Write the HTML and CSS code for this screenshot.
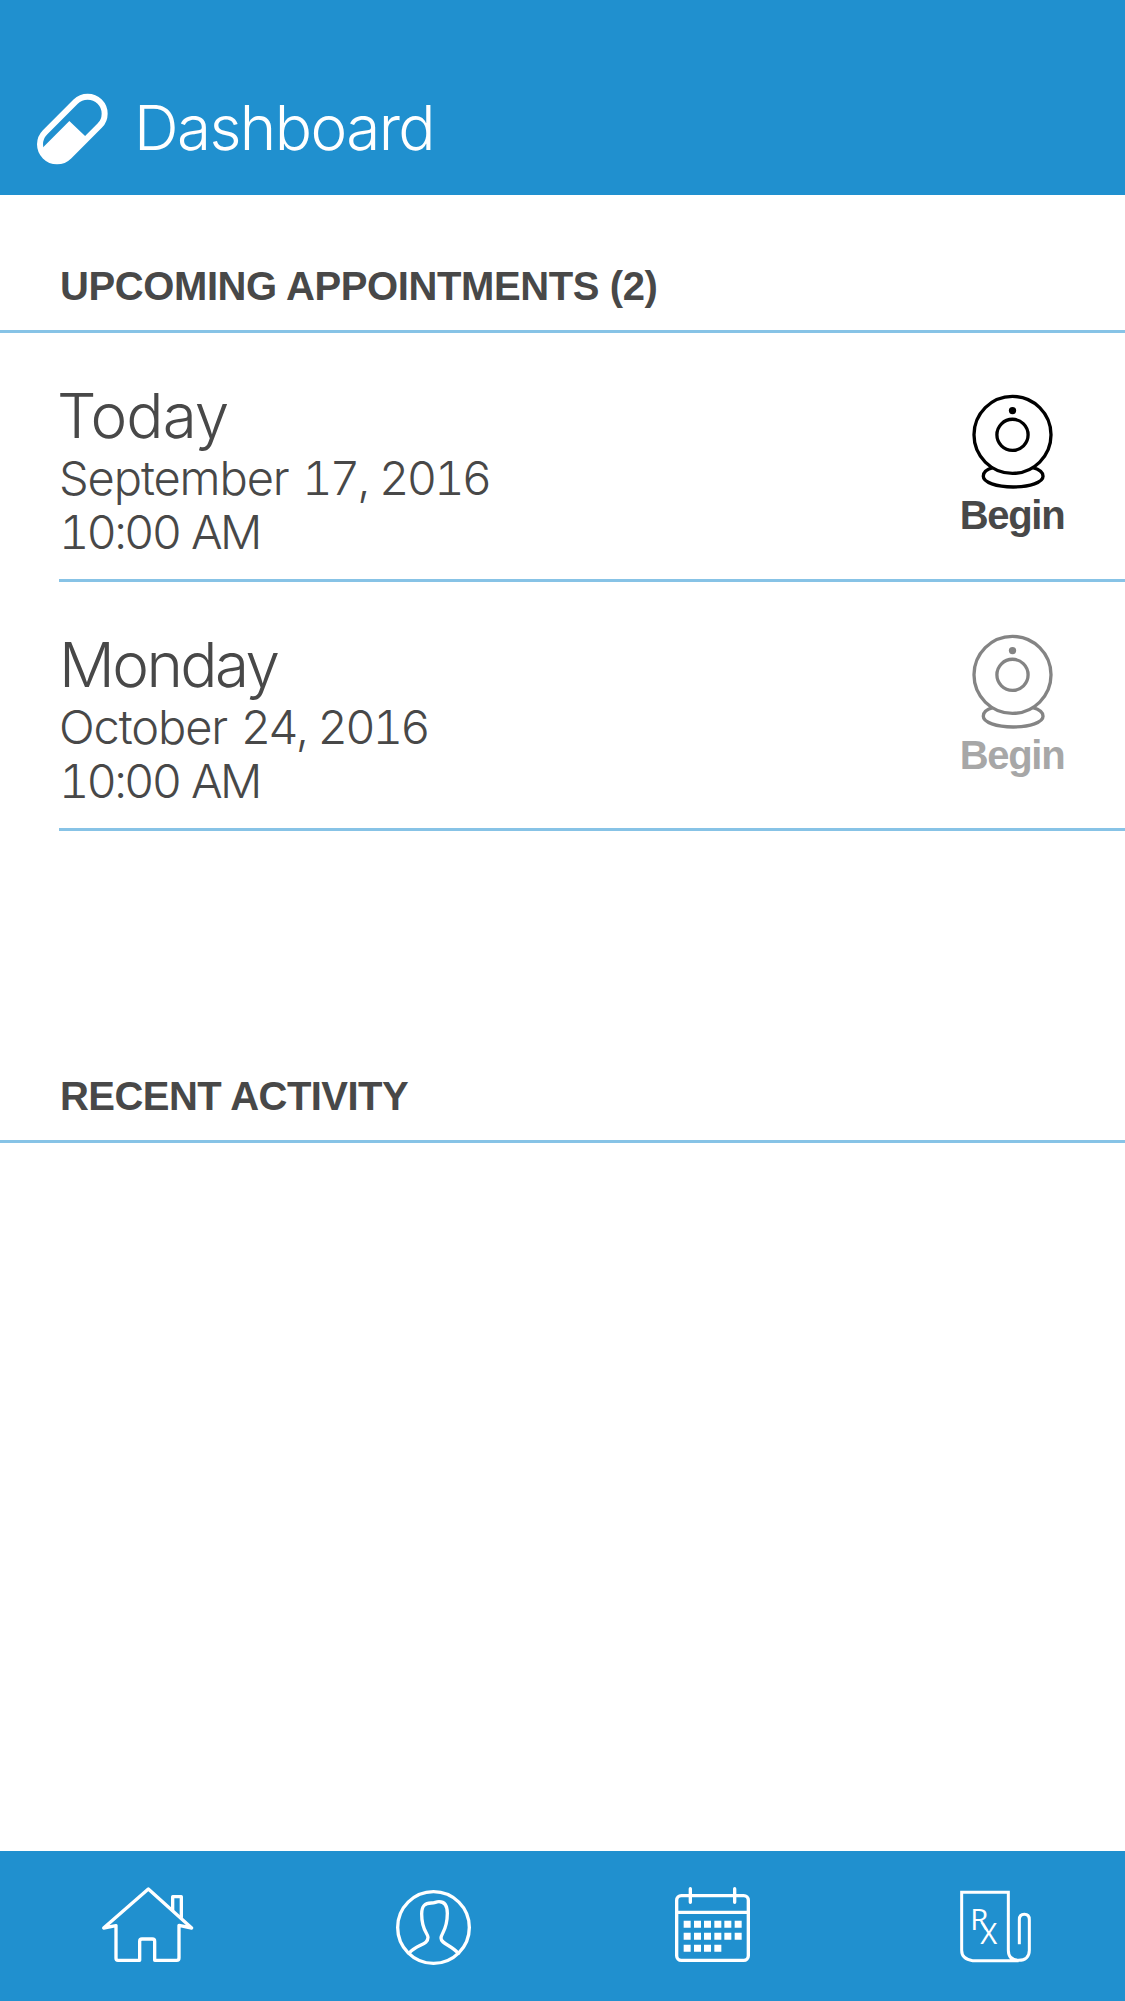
FILE: index.html
```
<!DOCTYPE html>
<html lang="en">

<head>
    <meta charset="UTF-8">
    <meta name="viewport" content="width=device-width, initial-scale=1.0">
    <link rel="stylesheet" href="styles.css">
    <title>Dashboard</title>
</head>

<body>
    <header class="header">
        <svg class="pill" viewBox="0 0 216 216">
            <g transform="rotate(45 109 108)">
                <rect x="58" y="-8" width="102" height="232" rx="51" fill="none" stroke="#fff" stroke-width="18" />
            </g>
            <path d="M20 164L100 84L148 130L154 135L99 190A51 51 0 0 1 12 154Z" fill="#fff" />
        </svg>
        <h1 class="title">Dashboard</h1>
    </header>

    <main class="content">
        <h2 class="section-title upcoming">UPCOMING APPOINTMENTS (2)</h2>

        <div class="appointment">
            <div class="info">
                <div class="day today">Today</div>
                <div class="date">September <span class="num">17, 2016</span></div>
                <div class="date"><span class="num">10:00 AM</span></div>
            </div>
            <div class="begin">
                <svg class="webcam" viewBox="0 0 250 290">
                    <circle cx="125" cy="125" r="116" />
                    <circle cx="125" cy="125" r="47" />
                    <circle class="dot" cx="125" cy="52" r="11" />
                    <path d="M66 224C47 229 37 238 37 250C37 268 76 282 127 282C178 282 217 268 217 250C217 238 205 229 186 224" />
                </svg>
                <span class="begin-text">Begin</span>
            </div>
        </div>

        <div class="appointment">
            <div class="info">
                <div class="day monday">Monday</div>
                <div class="date">October <span class="num">24, 2016</span></div>
                <div class="date"><span class="num">10:00 AM</span></div>
            </div>
            <div class="begin disabled">
                <svg class="webcam" viewBox="0 0 250 290">
                    <circle cx="125" cy="125" r="116" />
                    <circle cx="125" cy="125" r="47" />
                    <circle class="dot" cx="125" cy="52" r="11" />
                    <path d="M66 224C47 229 37 238 37 250C37 268 76 282 127 282C178 282 217 268 217 250C217 238 205 229 186 224" />
                </svg>
                <span class="begin-text">Begin</span>
            </div>
        </div>

        <h2 class="section-title recent">RECENT ACTIVITY</h2>
    </main>

    <nav class="navbar">
        <!-- home -->
        <svg class="nav-icon home" viewBox="0 33 360 450">
            <path d="M175 147L41 264L78 257V355Q78 361 84 361H149V304Q149 297 156 297H187Q194 297 194 304V361H260Q267 361 267 354V256L305 264Z" />
            <path d="M248 210V170H274V232" />
        </svg>
        <!-- profile -->
        <svg class="nav-icon" viewBox="0 33 360 450">
            <circle cx="160.500" cy="262.500" r="107.500" />
            <path d="M87 340C111 312 144 316 144 292C144 280 125 272 125 222C125 198 134 189 154 189C166 189 166 185 177 185C195 185 202 198 202 220C202 272 183 280 183 294C183 311 213 315 235 340" />
        </svg>
        <!-- calendar -->
        <svg class="nav-icon" viewBox="0 33 360 450">
            <rect x="50" y="167" width="215" height="194" rx="14" />
            <path d="M50 217H265M91 146V187M224 146V187" />
            <path class="days" d="M71 253H92M102 253H123M132 253H153M163 253H184M193 253H214M224 253H245M71 289H92M102 289H123M132 289H153M163 289H184M193 289H214M224 289H245M71 325H92M102 325H123M132 325H153M163 325H184" />
        </svg>
        <!-- prescriptions -->
        <svg class="nav-icon" viewBox="0 33 360 450">
            <path class="sheet" d="M236 362H98Q65 358 65 331V157H205V331C205 352 217 361 236 361C257 361 268 349 268 331V239Q268 223 253 223Q238 223 238 239V313" />
            <text x="91" y="269">R</text>
            <text x="121" y="312">X</text>
        </svg>
    </nav>
</body>

</html>
```

FILE: styles.css
```
body {
    margin: 0;
    height: 2001px;
    display: flex;
    flex-direction: column;
    background-color: #fff;
    color: #484848;
    font-family: Inter, "Liberation Sans", sans-serif;
}

.header {
    box-sizing: border-box;
    height: 195px;
    display: flex;
    padding: 93px 0 0 36px;
    background-color: #2090cf;
}

.pill {
    width: 72px;
    height: 72px;
}

.title {
    margin: 0 0 0 26px;
    color: #fff;
    font-size: 62px;
    font-weight: 300;
    line-height: 70px;
    letter-spacing: -1.6px;
}

.content {
    flex: 1;
}

.section-title {
    box-sizing: border-box;
    margin: 0;
    padding: 0 0 19px 60px;
    border-bottom: 3px solid #87c3e6;
    font-family: "Liberation Sans", Arial, sans-serif;
    font-size: 40px;
    font-weight: bold;
    line-height: 50px;
    letter-spacing: -0.4px;
    white-space: nowrap;
}

.upcoming {
    padding-top: 66px;
}

.recent {
    margin-top: 240px;
    letter-spacing: -0.55px;
}

.appointment {
    box-sizing: border-box;
    height: 249px;
    display: flex;
    justify-content: space-between;
    margin-left: 59px;
    padding-right: 53px;
    border-bottom: 3px solid #87c3e6;
}

.info {
    padding-top: 48px;
    font-weight: 300;
}

.day {
    font-size: 62px;
    line-height: 70px;
}

.today {
    margin-left: -2px;
    letter-spacing: -1px;
}

.monday {
    letter-spacing: -2.6px;
}

.date {
    font-size: 47px;
    line-height: 54px;
    letter-spacing: -1.1px;
    word-spacing: 2px;
    font-variant-numeric: tabular-nums;
}

.num {
    letter-spacing: -2.8px;
}

.begin {
    width: 120px;
    display: flex;
    flex-direction: column;
    align-items: center;
    padding-top: 60px;
}

.disabled {
    padding-top: 51px;
    opacity: 0.48;
}

.webcam {
    width: 83px;
    height: 97px;
    fill: none;
    stroke: #000;
    stroke-width: 10;
}

.webcam .dot {
    fill: #000;
    stroke: none;
}

.begin-text {
    font-family: "Liberation Sans", Arial, sans-serif;
    font-size: 40px;
    font-weight: bold;
    line-height: 50px;
    letter-spacing: -1.3px;
}

.navbar {
    height: 150px;
    display: flex;
    gap: 160px;
    padding-left: 90px;
    background-color: #2090cf;
}

.nav-icon {
    width: 120px;
    height: 150px;
    fill: none;
    stroke: #fff;
    stroke-width: 10;
    stroke-linecap: round;
    stroke-linejoin: round;
}

.home {
    margin-right: 10px;
}

.nav-icon .days {
    stroke-width: 21;
    stroke-linecap: butt;
}

.nav-icon .sheet {
    stroke-width: 9;
    stroke-linecap: butt;
    stroke-linejoin: miter;
}

.nav-icon text {
    fill: #fff;
    stroke: none;
    font-family: "Open Sans", sans-serif;
    font-size: 88px;
}
```
